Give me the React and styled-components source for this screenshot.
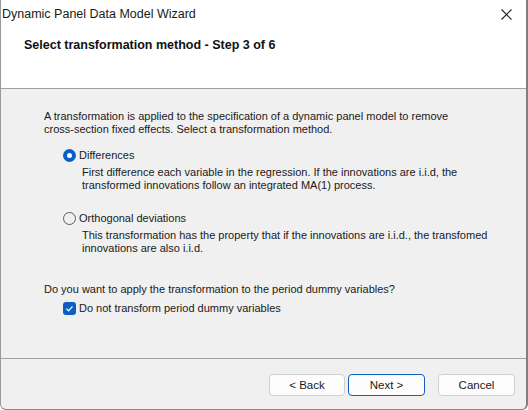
import React from 'react'
import styled, { createGlobalStyle } from 'styled-components'

const GlobalStyle = createGlobalStyle`
  html, body { margin: 0; padding: 0; background: #ffffff; }
  body { font-family: "Liberation Sans", Arial, sans-serif; }
`

const Window = styled.div`
  width: 528px;
  height: 410px;
  box-sizing: border-box;
  display: flex;
  flex-direction: column;
  background: #f0f0f0;
  border-left: 1px solid #9a9a9a;
  border-right: 2px solid #7f7f7f;
  border-bottom: 1px solid #8a8a8a;
  border-radius: 0 0 6px 6px;
  overflow: hidden;
  color: #1a1a1a;
`

const TitleBar = styled.div`
  height: 28px;
  display: flex;
  align-items: center;
  justify-content: space-between;
  background: #ffffff;
  padding: 0 14px 0 1px;
  font-size: 12.5px;
  color: #1a1a1a;
`

const CloseIcon = styled.svg`
  width: 11px;
  height: 11px;
`

const Header = styled.div`
  height: 61px;
  background: #ffffff;
  border-bottom: 1px solid #a0a0a0;
  padding: 10px 0 0 23px;
  box-sizing: border-box;
  font-size: 12.5px;
  font-weight: bold;
  color: #111;
`

const Body = styled.div`
  flex: 1;
  padding: 21px 0 0 43px;
  box-sizing: border-box;
  border-bottom: 1px solid #a0a0a0;
  font-size: 11px;
  line-height: 13px;
`

const Para = styled.p`
  margin: ${p => p.top || 0}px 0 0 0;
`

const Option = styled.div`
  margin: ${p => p.top}px 0 0 19px;
`

const OptionLabel = styled.label`
  display: flex;
  align-items: center;
  gap: 3px;
  height: 14px;
`

const Radio = styled.span`
  width: 13px;
  height: 13px;
  box-sizing: border-box;
  border-radius: 50%;
  border: ${p => (p.checked ? '4px solid #0a5fc5' : '1px solid #5a5a5a')};
  background: ${p => (p.checked ? '#ffffff' : 'transparent')};
`

const Check = styled.span`
  width: 13px;
  height: 13px;
  border-radius: 3px;
  background: #0a5fc5;
  display: flex;
  align-items: center;
  justify-content: center;
`

const Desc = styled.p`
  margin: 4px 0 0 19px;
`

const Footer = styled.div`
  height: 50px;
  display: flex;
  justify-content: flex-end;
  align-items: flex-start;
  padding: 15px 11px 0 0;
  box-sizing: border-box;
`

const Button = styled.button`
  width: ${p => p.w}px;
  height: 22px;
  margin-left: ${p => p.gap}px;
  background: #fdfdfd;
  border: 1px solid ${p => (p.primary ? '#0a5fc5' : '#d0d0d0')};
  border-radius: 4px;
  font-family: "Liberation Sans", Arial, sans-serif;
  font-size: 11.5px;
  color: #1a1a1a;
  padding: 0;
`

export default function App() {
  return (
    <>
      <GlobalStyle />
      <Window>
        <TitleBar>
          <span>Dynamic Panel Data Model Wizard</span>
          <CloseIcon viewBox="0 0 11 11">
            <path d="M0.5 0.5 L10.5 10.5 M10.5 0.5 L0.5 10.5" stroke="#222" strokeWidth="1.1" />
          </CloseIcon>
        </TitleBar>
        <Header>Select transformation method - Step 3 of 6</Header>
        <Body>
          <Para>
            A transformation is applied to the specification of a dynamic panel model to remove
            <br />
            cross-section fixed effects. Select a transformation method.
          </Para>
          <Option top={12}>
            <OptionLabel>
              <Radio checked />
              Differences
            </OptionLabel>
            <Desc>
              First difference each variable in the regression. If the innovations are i.i.d, the
              <br />
              transformed innovations follow an integrated MA(1) process.
            </Desc>
          </Option>
          <Option top={19}>
            <OptionLabel>
              <Radio />
              Orthogonal deviations
            </OptionLabel>
            <Desc>
              This transformation has the property that if the innovations are i.i.d., the transfomed
              <br />
              innovations are also i.i.d.
            </Desc>
          </Option>
          <Para top={28}>Do you want to apply the transformation to the period dummy variables?</Para>
          <Option top={5}>
            <OptionLabel>
              <Check>
                <svg width="9" height="9" viewBox="0 0 9 9">
                  <path d="M1.5 4.8 L3.6 6.8 L7.5 2.4" stroke="#fff" strokeWidth="1.2" fill="none" />
                </svg>
              </Check>
              Do not transform period dummy variables
            </OptionLabel>
          </Option>
        </Body>
        <Footer>
          <Button w={76} gap={0}>&lt; Back</Button>
          <Button w={77} gap={3} primary>Next &gt;</Button>
          <Button w={77} gap={13}>Cancel</Button>
        </Footer>
      </Window>
    </>
  )
}
